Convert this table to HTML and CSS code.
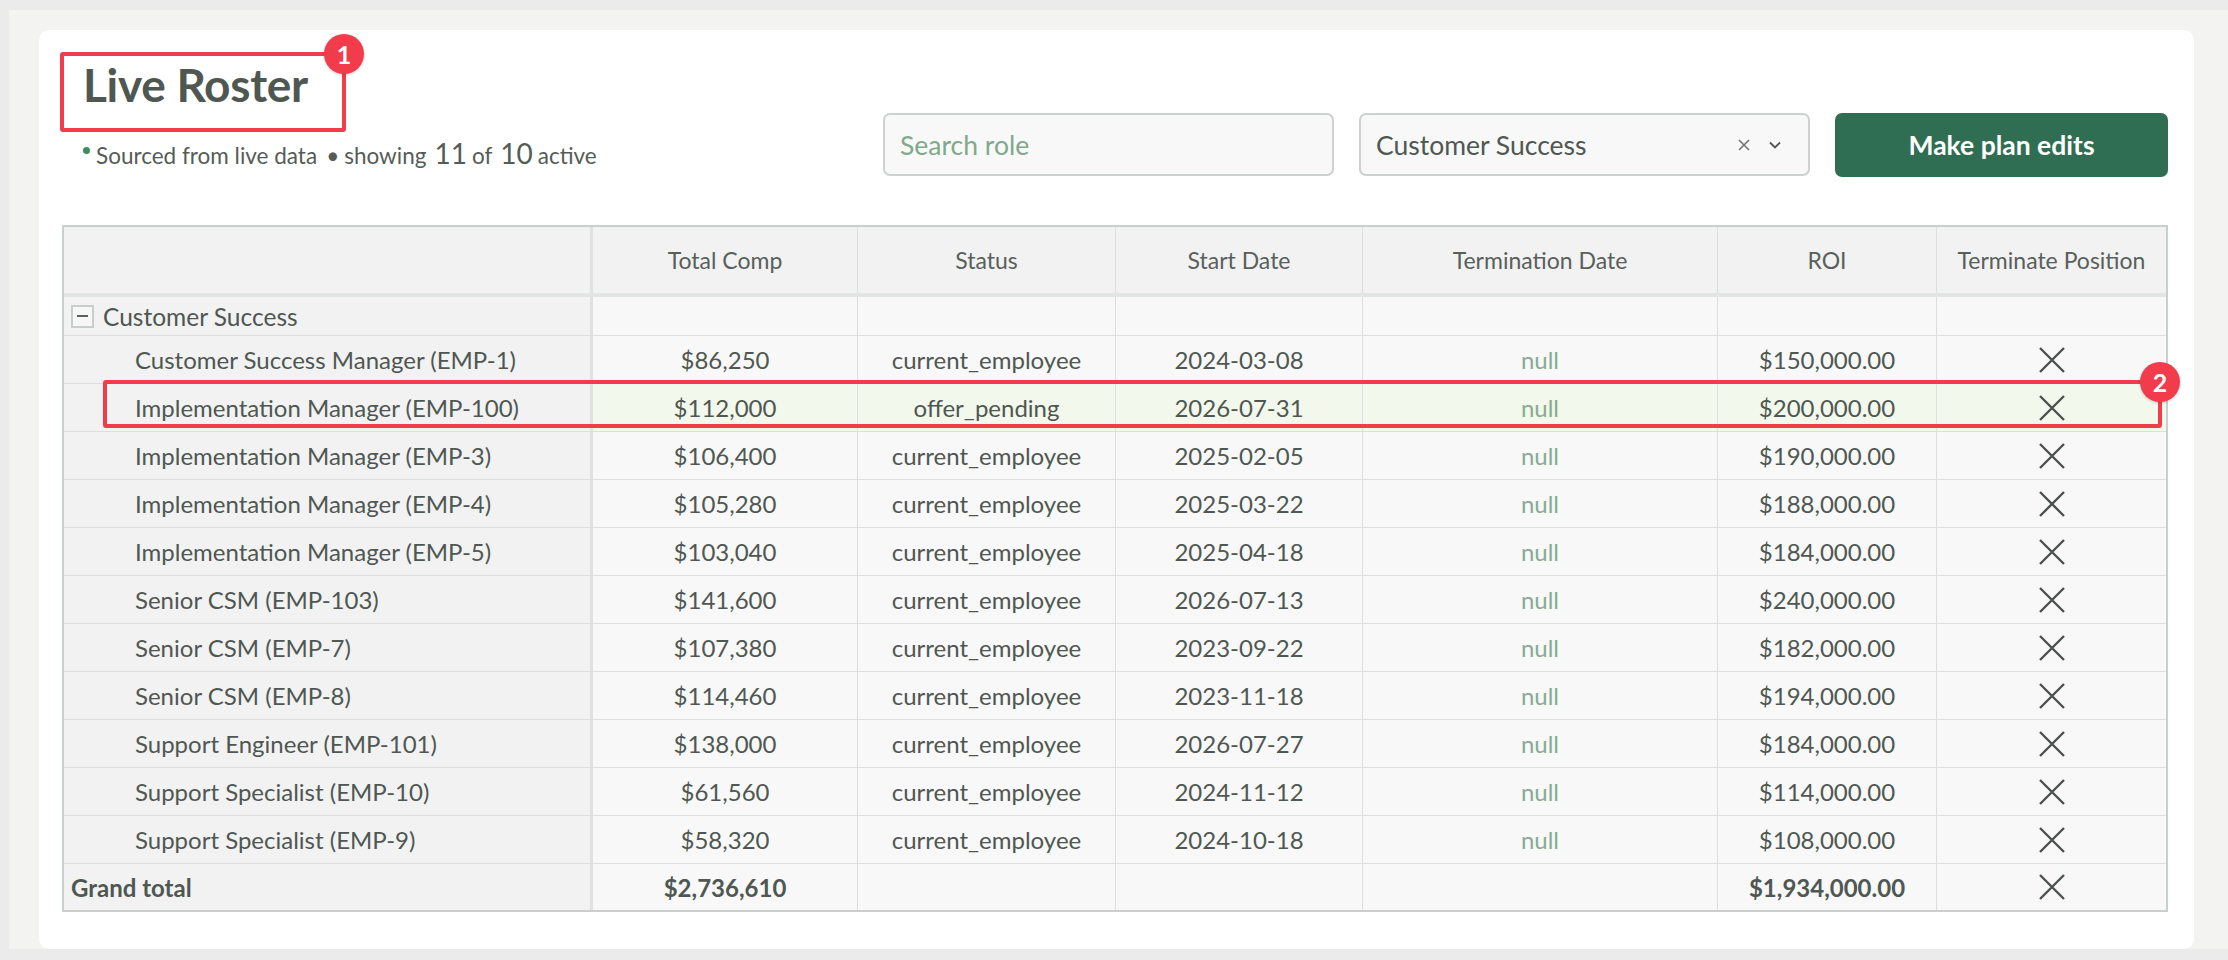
FILE: index.html
```html
<!DOCTYPE html>
<html lang="en">
<head>
<meta charset="utf-8">
<title>Live Roster</title>
<link rel="stylesheet" href="styles.css">
</head>
<body>
<div class="panel">
  <div class="card">
    <div class="header">
      <div class="title-block">
        <h1 class="title">Live Roster</h1>
        <div class="subtitle">
          <span class="dot"></span>
          <span class="sub-text">Sourced from live data</span>
          <span class="sep">•</span>
          <span class="sub-text">showing</span>
          <span class="big">11</span>
          <span class="sub-text">of</span>
          <span class="big">10</span>
          <span class="sub-text">active</span>
        </div>
      </div>
      <div class="controls">
        <div class="input search"><span class="placeholder">Search role</span></div>
        <div class="input select">
          <span class="select-value">Customer Success</span>
          <span class="select-icons">
            <svg class="clear-icon" width="12" height="12" viewBox="0 0 12 12"><path d="M1 1L11 11M11 1L1 11" stroke="#6a706c" stroke-width="1.5" fill="none"/></svg>
            <svg class="chev-icon" width="12" height="8" viewBox="0 0 12 8"><path d="M1 1.5L6 6.5L11 1.5" stroke="#4f5651" stroke-width="1.8" fill="none"/></svg>
          </span>
        </div>
        <button class="btn">Make plan edits</button>
      </div>
    </div>

    <div class="grid">
      <div class="row head">
        <div class="cell first"></div>
        <div class="cell">Total Comp</div>
        <div class="cell">Status</div>
        <div class="cell">Start Date</div>
        <div class="cell">Termination Date</div>
        <div class="cell">ROI</div>
        <div class="cell last">Terminate Position</div>
      </div>
      <div class="row group">
        <div class="cell first group-label"><span class="toggle"><span class="minus"></span></span>Customer Success</div>
        <div class="cell"></div><div class="cell"></div><div class="cell"></div><div class="cell"></div><div class="cell"></div><div class="cell last"></div>
      </div>

      <div class="row data">
        <div class="cell first label">Customer Success Manager (EMP-1)</div>
        <div class="cell">$86,250</div><div class="cell">current_employee</div><div class="cell">2024-03-08</div><div class="cell null">null</div><div class="cell">$150,000.00</div>
        <div class="cell last"><svg class="x" viewBox="0 0 28 28"><path d="M2 2L26 26M26 2L2 26"/></svg></div>
      </div>
      <div class="row data hl">
        <div class="cell first label">Implementation Manager (EMP-100)</div>
        <div class="cell">$112,000</div><div class="cell">offer_pending</div><div class="cell">2026-07-31</div><div class="cell null">null</div><div class="cell">$200,000.00</div>
        <div class="cell last"><svg class="x" viewBox="0 0 28 28"><path d="M2 2L26 26M26 2L2 26"/></svg></div>
      </div>
      <div class="row data">
        <div class="cell first label">Implementation Manager (EMP-3)</div>
        <div class="cell">$106,400</div><div class="cell">current_employee</div><div class="cell">2025-02-05</div><div class="cell null">null</div><div class="cell">$190,000.00</div>
        <div class="cell last"><svg class="x" viewBox="0 0 28 28"><path d="M2 2L26 26M26 2L2 26"/></svg></div>
      </div>
      <div class="row data">
        <div class="cell first label">Implementation Manager (EMP-4)</div>
        <div class="cell">$105,280</div><div class="cell">current_employee</div><div class="cell">2025-03-22</div><div class="cell null">null</div><div class="cell">$188,000.00</div>
        <div class="cell last"><svg class="x" viewBox="0 0 28 28"><path d="M2 2L26 26M26 2L2 26"/></svg></div>
      </div>
      <div class="row data">
        <div class="cell first label">Implementation Manager (EMP-5)</div>
        <div class="cell">$103,040</div><div class="cell">current_employee</div><div class="cell">2025-04-18</div><div class="cell null">null</div><div class="cell">$184,000.00</div>
        <div class="cell last"><svg class="x" viewBox="0 0 28 28"><path d="M2 2L26 26M26 2L2 26"/></svg></div>
      </div>
      <div class="row data">
        <div class="cell first label">Senior CSM (EMP-103)</div>
        <div class="cell">$141,600</div><div class="cell">current_employee</div><div class="cell">2026-07-13</div><div class="cell null">null</div><div class="cell">$240,000.00</div>
        <div class="cell last"><svg class="x" viewBox="0 0 28 28"><path d="M2 2L26 26M26 2L2 26"/></svg></div>
      </div>
      <div class="row data">
        <div class="cell first label">Senior CSM (EMP-7)</div>
        <div class="cell">$107,380</div><div class="cell">current_employee</div><div class="cell">2023-09-22</div><div class="cell null">null</div><div class="cell">$182,000.00</div>
        <div class="cell last"><svg class="x" viewBox="0 0 28 28"><path d="M2 2L26 26M26 2L2 26"/></svg></div>
      </div>
      <div class="row data">
        <div class="cell first label">Senior CSM (EMP-8)</div>
        <div class="cell">$114,460</div><div class="cell">current_employee</div><div class="cell">2023-11-18</div><div class="cell null">null</div><div class="cell">$194,000.00</div>
        <div class="cell last"><svg class="x" viewBox="0 0 28 28"><path d="M2 2L26 26M26 2L2 26"/></svg></div>
      </div>
      <div class="row data">
        <div class="cell first label">Support Engineer (EMP-101)</div>
        <div class="cell">$138,000</div><div class="cell">current_employee</div><div class="cell">2026-07-27</div><div class="cell null">null</div><div class="cell">$184,000.00</div>
        <div class="cell last"><svg class="x" viewBox="0 0 28 28"><path d="M2 2L26 26M26 2L2 26"/></svg></div>
      </div>
      <div class="row data">
        <div class="cell first label">Support Specialist (EMP-10)</div>
        <div class="cell">$61,560</div><div class="cell">current_employee</div><div class="cell">2024-11-12</div><div class="cell null">null</div><div class="cell">$114,000.00</div>
        <div class="cell last"><svg class="x" viewBox="0 0 28 28"><path d="M2 2L26 26M26 2L2 26"/></svg></div>
      </div>
      <div class="row data">
        <div class="cell first label">Support Specialist (EMP-9)</div>
        <div class="cell">$58,320</div><div class="cell">current_employee</div><div class="cell">2024-10-18</div><div class="cell null">null</div><div class="cell">$108,000.00</div>
        <div class="cell last"><svg class="x" viewBox="0 0 28 28"><path d="M2 2L26 26M26 2L2 26"/></svg></div>
      </div>
      <div class="row total">
        <div class="cell first total-label">Grand total</div>
        <div class="cell">$2,736,610</div><div class="cell"></div><div class="cell"></div><div class="cell"></div><div class="cell">$1,934,000.00</div>
        <div class="cell last"><svg class="x" viewBox="0 0 28 28"><path d="M2 2L26 26M26 2L2 26"/></svg></div>
      </div>
    </div>

    <div class="annot annot-1"><span class="badge">1</span></div>
    <div class="annot annot-2"><span class="badge">2</span></div>
  </div>
</div>
</body>
</html>
```

FILE: styles.css
```css
html, body {
  margin: 0;
  padding: 0;
  width: 2228px;
  height: 960px;
  overflow: hidden;
  background: #ebebeb;
  font-family: Lato, "Liberation Sans", sans-serif;
  color: #4f5752;
}

.panel {
  margin: 10px 0 0 9px;
  padding: 20px 0 0 30px;
  height: 919px;
  background: #f3f3f2;
}

.card {
  position: relative;
  box-sizing: border-box;
  width: 2155px;
  height: 919px;
  background: #ffffff;
  border-radius: 10px;
  padding: 27px 26px 0 23px;
}

.header {
  display: flex;
  justify-content: space-between;
  align-items: flex-start;
  height: 168px;
}

.title-block {
  padding-left: 21px;
}

.title {
  margin: 0;
  font-size: 46px;
  line-height: 56px;
  font-weight: 700;
  color: #4f5751;
  letter-spacing: -0.3px;
}

.subtitle {
  display: flex;
  align-items: baseline;
  height: 30px;
  margin-top: 23px;
  font-size: 22.5px;
  color: #555c57;
}

.dot {
  width: 7px;
  height: 7px;
  border-radius: 50%;
  background: #3f8f5d;
  margin-right: 6px;
  align-self: center;
  position: relative;
  top: -1px;
}

.sep {
  margin: 0 5px 0 9px;
}

.big {
  font-size: 28px;
  margin: 0 5px 0 8px;
}

.controls {
  display: flex;
  gap: 25px;
  margin-top: 56px;
}

.input {
  box-sizing: border-box;
  width: 451px;
  height: 63px;
  border: 2px solid #cdd1cf;
  border-radius: 7px;
  background: #f8f8f8;
  display: flex;
  align-items: center;
  padding: 0 15px;
  font-size: 26.5px;
}

.placeholder {
  color: #7fa98a;
}

.select {
  justify-content: space-between;
}

.select-value {
  color: #4f5752;
}

.select-icons {
  display: flex;
  align-items: center;
  gap: 19px;
  margin-right: 12px;
}

.btn {
  box-sizing: border-box;
  width: 333px;
  height: 64px;
  border: none;
  border-radius: 7px;
  background: #2f6e52;
  color: #ffffff;
  font-family: Lato, "Liberation Sans", sans-serif;
  font-size: 26.5px;
  font-weight: 700;
  cursor: pointer;
}

/* Table grid */
.grid {
  box-sizing: border-box;
  width: 2106px;
  border: 2px solid #c9cfcc;
  font-size: 24px;
}

.row {
  display: grid;
  grid-template-columns: 529px 265px 258px 247px 355px 219px 1fr;
  border-bottom: 1px solid #dcdfdd;
}

.row.head {
  height: 66px;
  border-bottom: 4px solid #e3e4e4;
  background: #f2f2f2;
  color: #59605b;
  font-size: 23px;
}

.row.group {
  height: 38px;
}

.row.data {
  height: 47px;
}

.row.total {
  height: 46px;
  border-bottom: none;
  font-weight: 700;
  font-size: 24px;
}

.cell {
  box-sizing: border-box;
  display: flex;
  align-items: center;
  justify-content: center;
  border-right: 1px solid #dcdfdd;
  background: #f8f8f8;
  white-space: nowrap;
}

.row.head .cell {
  background: #f2f2f2;
}

.cell.first {
  background: #f2f2f2;
  border-right: 3px solid #e0e1e1;
  justify-content: flex-start;
}

.cell.last {
  border-right: none;
}

.row.hl .cell {
  background: #f2f8eb;
}

.row.hl .cell.first {
  background: #f2f2f2;
}

.group-label {
  padding-left: 7px;
  font-size: 24.5px;
}

.toggle {
  box-sizing: border-box;
  width: 23px;
  height: 23px;
  border: 2px solid #c9cdcb;
  background: #f7f7f7;
  display: inline-flex;
  align-items: center;
  justify-content: center;
  margin-right: 9px;
}

.minus {
  width: 11px;
  height: 2px;
  background: #5a615c;
}

.label {
  padding-left: 71px;
}

.total-label {
  padding-left: 7px;
}

.null {
  color: #86ad92;
}

.x {
  width: 28px;
  height: 28px;
  stroke: #4b524d;
  stroke-width: 2.4;
  fill: none;
}

/* annotations */
.annot {
  position: absolute;
  box-sizing: border-box;
  border: 4px solid #f23c4b;
  border-radius: 3px;
}

.annot-1 {
  left: 21px;
  top: 22px;
  width: 286px;
  height: 80px;
}

.annot-2 {
  left: 64px;
  top: 350px;
  width: 2059px;
  height: 48px;
}

.badge {
  position: absolute;
  right: -22px;
  top: -22px;
  width: 40px;
  height: 40px;
  border-radius: 50%;
  background: #f23c4b;
  color: #ffffff;
  font-weight: 700;
  font-size: 25px;
  display: flex;
  align-items: center;
  justify-content: center;
  box-shadow: 0 1px 3px rgba(0,0,0,0.2);
}
```
